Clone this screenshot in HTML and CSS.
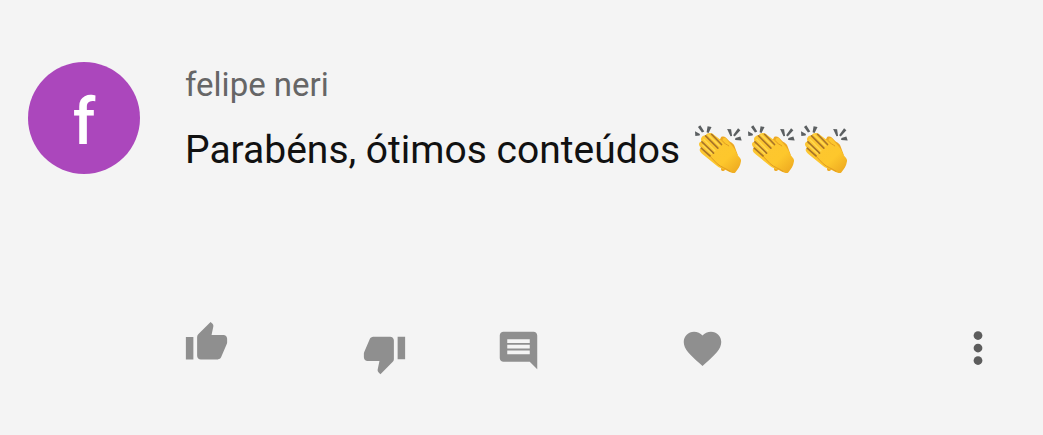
FILE: index.html
```html
<!DOCTYPE html>
<html lang="pt-BR">
<head>
<meta charset="utf-8">
<meta name="viewport" content="width=device-width, initial-scale=1">
<title>Comentário</title>
<link rel="stylesheet" href="styles.css">
</head>
<body>
<svg class="defs" aria-hidden="true">
  <defs>
    <linearGradient id="skin" x1="0" y1="0" x2="1" y2="1">
      <stop offset="0" stop-color="#fcc634"/>
      <stop offset=".65" stop-color="#fdc72c"/>
      <stop offset="1" stop-color="#eba41e"/>
    </linearGradient>
    <symbol id="clap" viewBox="0 0 160 160">
      <path fill="#5b5f61" d="M3 22l15 8-1 5-13 1zM12 9l7-5 12 19-7 3zM41 7l12 2-9 18-6-2zM100 15l12 1 3 20-5 1zM133 13l7 6-17 19-5-4zM140 38l4 12-20-2 1-6z"/>
      <path fill="#eca823" d="M76 48C82 44 80 36 88 38C94 38 98 43 104 49C112 57 121 58 123 69L132 93L92 140C84 144 80 140 82 132Z"/>
      <path fill="url(#skin)" d="M35 34C40 26 52 25 61 33L85 51C88 43 91 39 97 44C107 58 123 72 129 88C133 99 143 102 142 112C140 127 133 137 124 147C120 150 113 147 108 145C95 137 77 135 65 123L27 92C17 84 14 77 21 72C12 63 14 55 23 53C17 43 26 34 35 34Z"/>
      <path fill="none" stroke="#a87428" stroke-width="5" stroke-linecap="round" d="M35 36L72 73M24 54L59 88M22 73L49 97M53 31L83 62"/>
      <path fill="none" stroke="#e09a20" stroke-width="3" stroke-linecap="round" d="M86 51C91 60 99 61 105 66M49 98L70 120C82 131 97 134 109 143"/>
      <path fill="none" stroke="#ffd950" stroke-width="4" stroke-linecap="round" d="M43 33L76 65M30 47L63 81M27 64L53 89"/>
    </symbol>
  </defs>
</svg>
<article class="comment">
  <div class="avatar" aria-hidden="true">f</div>
  <div class="content">
    <h2 class="author">felipe neri</h2>
    <p class="message">Parabéns, ótimos conteúdos <span class="claps" role="img" aria-label="Palmas"><svg class="clap"><use href="#clap"/></svg><svg class="clap"><use href="#clap"/></svg><svg class="clap"><use href="#clap"/></svg></span></p>
    <div class="actions">
      <button class="action raised" type="button" aria-label="Gostei"><svg class="icon" viewBox="0 0 24 24"><path d="M1 21h4V9H1v12zm22-11c0-1.1-.9-2-2-2h-6.31l.95-4.57.03-.32c0-.41-.17-.79-.44-1.06L14.17 1 7.59 7.59C7.22 7.95 7 8.45 7 9v10c0 1.1.9 2 2 2h9c.83 0 1.54-.5 1.84-1.22l3.02-7.05c.09-.23.14-.47.14-.73v-2z"/></svg></button>
      <button class="action lowered" type="button" aria-label="Não gostei"><svg class="icon" viewBox="0 0 24 24"><path d="M15 3H6c-.83 0-1.54.5-1.84 1.22l-3.02 7.05c-.09.23-.14.47-.14.73v2c0 1.1.9 2 2 2h6.31l-.95 4.57-.03.32c0 .41.17.79.44 1.06L9.83 23l6.59-6.59c.36-.36.58-.86.58-1.41V5c0-1.1-.9-2-2-2zm4 0v12h4V3h-4z"/></svg></button>
      <button class="action" type="button" aria-label="Responder"><svg class="icon" viewBox="0 -1 24 24"><path d="M21.99 4c0-1.1-.89-2-1.99-2H4c-1.1 0-2 .9-2 2v12c0 1.1.9 2 2 2h14l4 4-.01-18zM18 14H6v-2h12v2zm0-3H6V9h12v2zm0-3H6V6h12v2z"/></svg></button>
      <button class="action" type="button" aria-label="Coração"><svg class="icon" viewBox="0 0 24 24"><path d="M12 21.35l-1.45-1.32C5.4 15.36 2 12.28 2 8.5 2 5.42 4.42 3 7.5 3c1.74 0 3.41.81 4.5 2.09C13.09 3.81 14.76 3 16.5 3 19.58 3 22 5.42 22 8.5c0 3.78-3.4 6.86-8.55 11.54L12 21.35z"/></svg></button>
      <button class="action more" type="button" aria-label="Mais opções"><svg class="icon" viewBox="0 0 24 24"><circle cx="12" cy="6" r="2.1"/><circle cx="12" cy="12" r="2.1"/><circle cx="12" cy="18" r="2.1"/></svg></button>
    </div>
  </div>
</article>
</body>
</html>
```
FILE: styles.css
```css
* {
  box-sizing: border-box;
}

body {
  margin: 0;
  background: #f4f4f4;
  font-family: Roboto, "Liberation Sans", sans-serif;
}

.defs {
  position: absolute;
  width: 0;
  height: 0;
}

.comment {
  display: flex;
  gap: 44px;
  padding: 62px 40px 56px 28px;
}

.avatar {
  display: flex;
  flex: none;
  align-items: center;
  justify-content: center;
  width: 112px;
  height: 112px;
  padding-top: 10px;
  border-radius: 50%;
  background: #ab47bc;
  color: #fff;
  font-size: 64px;
  font-weight: 500;
  line-height: 64px;
}

.content {
  flex: 1;
  min-width: 0;
}

.author {
  margin: 0 0 11px 1px;
  color: #666;
  font-size: 33px;
  font-weight: 400;
  line-height: 45px;
}

.message {
  display: flex;
  flex-wrap: wrap;
  align-items: center;
  gap: 14px;
  margin: 0 0 0 1px;
  color: #111;
  font-size: 39px;
  line-height: 64px;
}

.claps {
  display: flex;
}

.clap {
  width: 53px;
  height: 53px;
}

.actions {
  display: grid;
  grid-template-columns: 178fr 134fr 183fr 273fr auto;
  align-items: center;
  min-height: 56px;
  margin-top: 138px;
}

.action {
  display: flex;
  justify-self: start;
  padding: 0;
  border: 0;
  background: none;
  color: #8f8f8f;
  cursor: pointer;
}

.raised {
  align-self: start;
}

.lowered {
  align-self: end;
}

.icon {
  width: 45px;
  height: 45px;
  fill: currentColor;
}

.more {
  color: #5c5c5c;
}

.more .icon {
  width: 50px;
  height: 50px;
}
```
